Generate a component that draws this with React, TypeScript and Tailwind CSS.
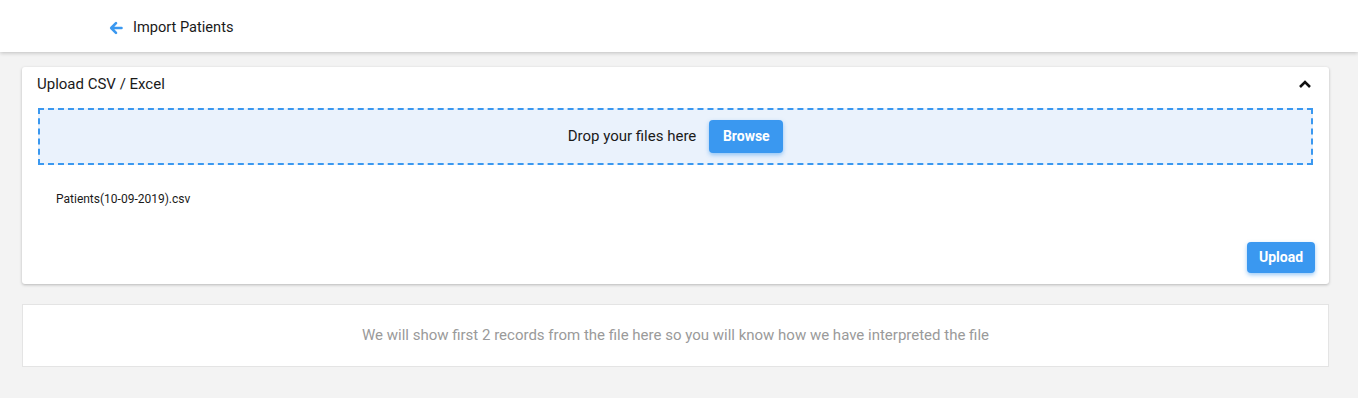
import React from "react";

export default function App() {
  return (
    <div
      className="min-h-[398px] w-full bg-[#f3f3f3] text-[#1a1a1a]"
      style={{ fontFamily: "Roboto, 'Liberation Sans', sans-serif" }}
    >
      <header className="h-[52px] bg-white shadow-[0_1px_4px_rgba(0,0,0,0.22)] flex items-center pl-[109px] pt-[3px]">
        <svg width="14" height="14" viewBox="0 0 14 14" className="mr-[10px]">
          <path
            d="M12.5 7H2.5M7 2.2L2.2 7 7 11.8"
            stroke="#3a98f0"
            strokeWidth="2.6"
            fill="none"
            strokeLinecap="round"
            strokeLinejoin="round"
          />
        </svg>
        <span className="text-[14.6px]">Import Patients</span>
      </header>

      <div className="px-[22px] pt-[15px] pr-[29px]">
        <div className="bg-white rounded-[3px] shadow-[0_1px_3px_rgba(0,0,0,0.25)] pt-[8px] pb-[11px]">
          <div className="flex items-center justify-between pl-[15px] pr-[17px] h-[18px] mb-[15px]">
            <span className="text-[15px]">Upload CSV / Excel</span>
            <svg width="14" height="10" viewBox="0 0 14 10">
              <path d="M2 8L7 3l5 5" stroke="#111" strokeWidth="2.6" fill="none" />
            </svg>
          </div>
          <div className="mx-[16px] h-[57px] border-2 border-dashed border-[#3a98f0] bg-[#eaf2fc] flex items-center justify-center gap-[13px]">
            <span className="text-[15px]">Drop your files here</span>
            <button className="h-[33px] w-[74px] rounded-[4px] bg-[#3a98f0] text-white font-bold text-[14px] shadow-[0_2px_4px_rgba(58,152,240,0.5)]">
              Browse
            </button>
          </div>
          <div className="pl-[34px] pt-[27px] text-[12px] leading-[14px]">
            Patients(10-09-2019).csv
          </div>
          <div className="flex justify-end pr-[14px] mt-[36px]">
            <button className="h-[31px] w-[68px] rounded-[4px] bg-[#3a98f0] text-white font-bold text-[14px] shadow-[0_2px_4px_rgba(58,152,240,0.5)]">
              Upload
            </button>
          </div>
        </div>

        <div className="mt-[20px] h-[63px] bg-white border border-[#e4e4e4] flex items-center justify-center text-[15px] text-[#9a9a9a]">
          We will show first 2 records from the file here so you will know how we have interpreted the file
        </div>
      </div>
    </div>
  );
}
